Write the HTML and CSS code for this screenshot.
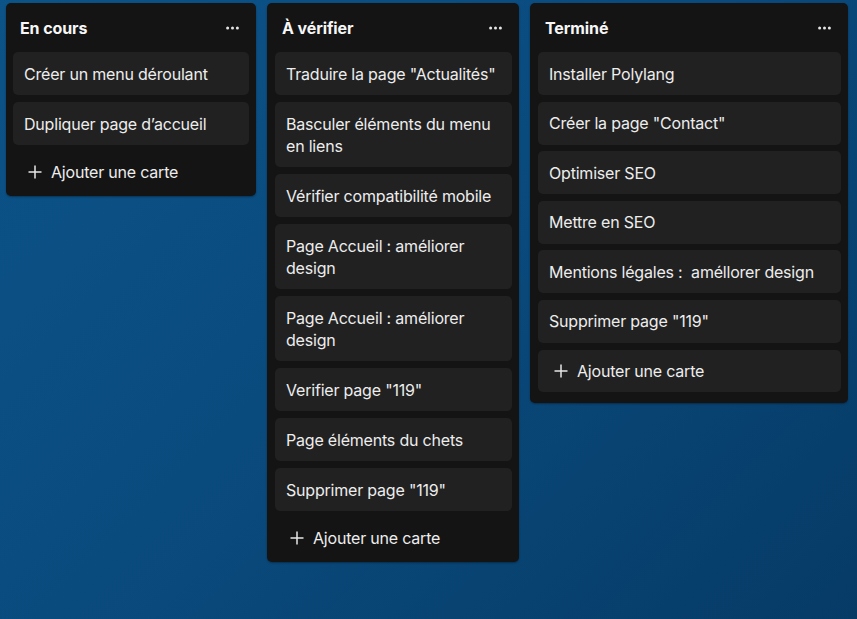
FILE: index.html
```html
<!DOCTYPE html>
<html lang="fr">
<head>
<meta charset="utf-8">
<title>Tableau</title>
<link rel="stylesheet" href="styles.css">
</head>
<body>
<div class="board">
  <section class="list list-a">
    <header class="list-head">
      <h2 class="list-title">En cours</h2>
      <svg class="dots" width="13" height="4" viewBox="0 0 13 4"><circle cx="1.6" cy="2" r="1.5"/><circle cx="6.5" cy="2" r="1.5"/><circle cx="11.4" cy="2" r="1.5"/></svg>
    </header>
    <div class="cards">
      <div class="card">Créer un menu déroulant</div>
      <div class="card">Dupliquer page d’accueil</div>
      <div class="add"><svg class="plus" width="14" height="14" viewBox="0 0 14 14"><path d="M7 0.5V13.5M0.5 7H13.5"/></svg><span>Ajouter une carte</span></div>
    </div>
  </section>

  <section class="list list-b">
    <header class="list-head">
      <h2 class="list-title">À vérifier</h2>
      <svg class="dots" width="13" height="4" viewBox="0 0 13 4"><circle cx="1.6" cy="2" r="1.5"/><circle cx="6.5" cy="2" r="1.5"/><circle cx="11.4" cy="2" r="1.5"/></svg>
    </header>
    <div class="cards">
      <div class="card">Traduire la page "Actualités"</div>
      <div class="card">Basculer éléments du menu en liens</div>
      <div class="card">Vérifier compatibilité mobile</div>
      <div class="card">Page Accueil : améliorer design</div>
      <div class="card">Page Accueil : améliorer design</div>
      <div class="card">Verifier page "119"</div>
      <div class="card">Page éléments du chets</div>
      <div class="card">Supprimer page "119"</div>
      <div class="add"><svg class="plus" width="14" height="14" viewBox="0 0 14 14"><path d="M7 0.5V13.5M0.5 7H13.5"/></svg><span>Ajouter une carte</span></div>
    </div>
  </section>

  <section class="list list-c">
    <header class="list-head">
      <h2 class="list-title">Terminé</h2>
      <svg class="dots" width="13" height="4" viewBox="0 0 13 4"><circle cx="1.6" cy="2" r="1.5"/><circle cx="6.5" cy="2" r="1.5"/><circle cx="11.4" cy="2" r="1.5"/></svg>
    </header>
    <div class="cards">
      <div class="card">Installer Polylang</div>
      <div class="card">Créer la page "Contact"</div>
      <div class="card">Optimiser SEO</div>
      <div class="card">Mettre en SEO</div>
      <div class="card">Mentions légales :&nbsp; améllorer design</div>
      <div class="card">Supprimer page "119"</div>
      <div class="add add-filled"><svg class="plus" width="14" height="14" viewBox="0 0 14 14"><path d="M7 0.5V13.5M0.5 7H13.5"/></svg><span>Ajouter une carte</span></div>
    </div>
  </section>
</div>
</body>
</html>
```

FILE: styles.css
```css
html, body {
  margin: 0;
  padding: 0;
  height: 100%;
}

body {
  background: linear-gradient(135deg, #0c5388 0%, #0a4b7e 45%, #063b66 100%);
  font-family: Inter, "Noto Sans", "Liberation Sans", sans-serif;
  color: #ededed;
  overflow: hidden;
}

.board {
  display: flex;
  align-items: flex-start;
  gap: 11px;
  padding: 3px 0 0 6px;
}

.list {
  background: #141414;
  border-radius: 5px;
  box-shadow: 0 1px 2px rgba(0, 0, 0, 0.35);
  padding: 0 7px 4px 7px;
  box-sizing: border-box;
}

.list-a { width: 250px; }
.list-b { width: 252px; padding-left: 8px; }
.list-c { width: 318px; padding-left: 8px; padding-bottom: 11px; }

.list-head {
  height: 49px;
  display: flex;
  align-items: center;
  justify-content: space-between;
  padding: 0 10px 0 7px;
}

.list-title {
  margin: 0;
  font-size: 16px;
  font-weight: 700;
  color: #f7f7f7;
  letter-spacing: -0.1px;
}

.dots {
  fill: #e6e6e6;
  display: block;
}

.cards {
  display: flex;
  flex-direction: column;
  gap: 7px;
}

.list-c .cards {
  gap: 6.6px;
}

.card {
  background: #212121;
  border-radius: 5px;
  padding: 10.5px 5px 10.5px 11px;
  font-size: 16px;
  line-height: 22px;
  letter-spacing: -0.2px;
  color: #ededed;
}

.add {
  display: flex;
  align-items: center;
  gap: 9px;
  height: 40px;
  padding-left: 15px;
  border-radius: 5px;
  font-size: 16px;
  letter-spacing: -0.2px;
  color: #ededed;
}

.add-filled {
  background: #212121;
  height: 42px;
  padding-left: 16px;
}

.plus {
  stroke: #e6e6e6;
  stroke-width: 1.5;
  fill: none;
  display: block;
}
```
